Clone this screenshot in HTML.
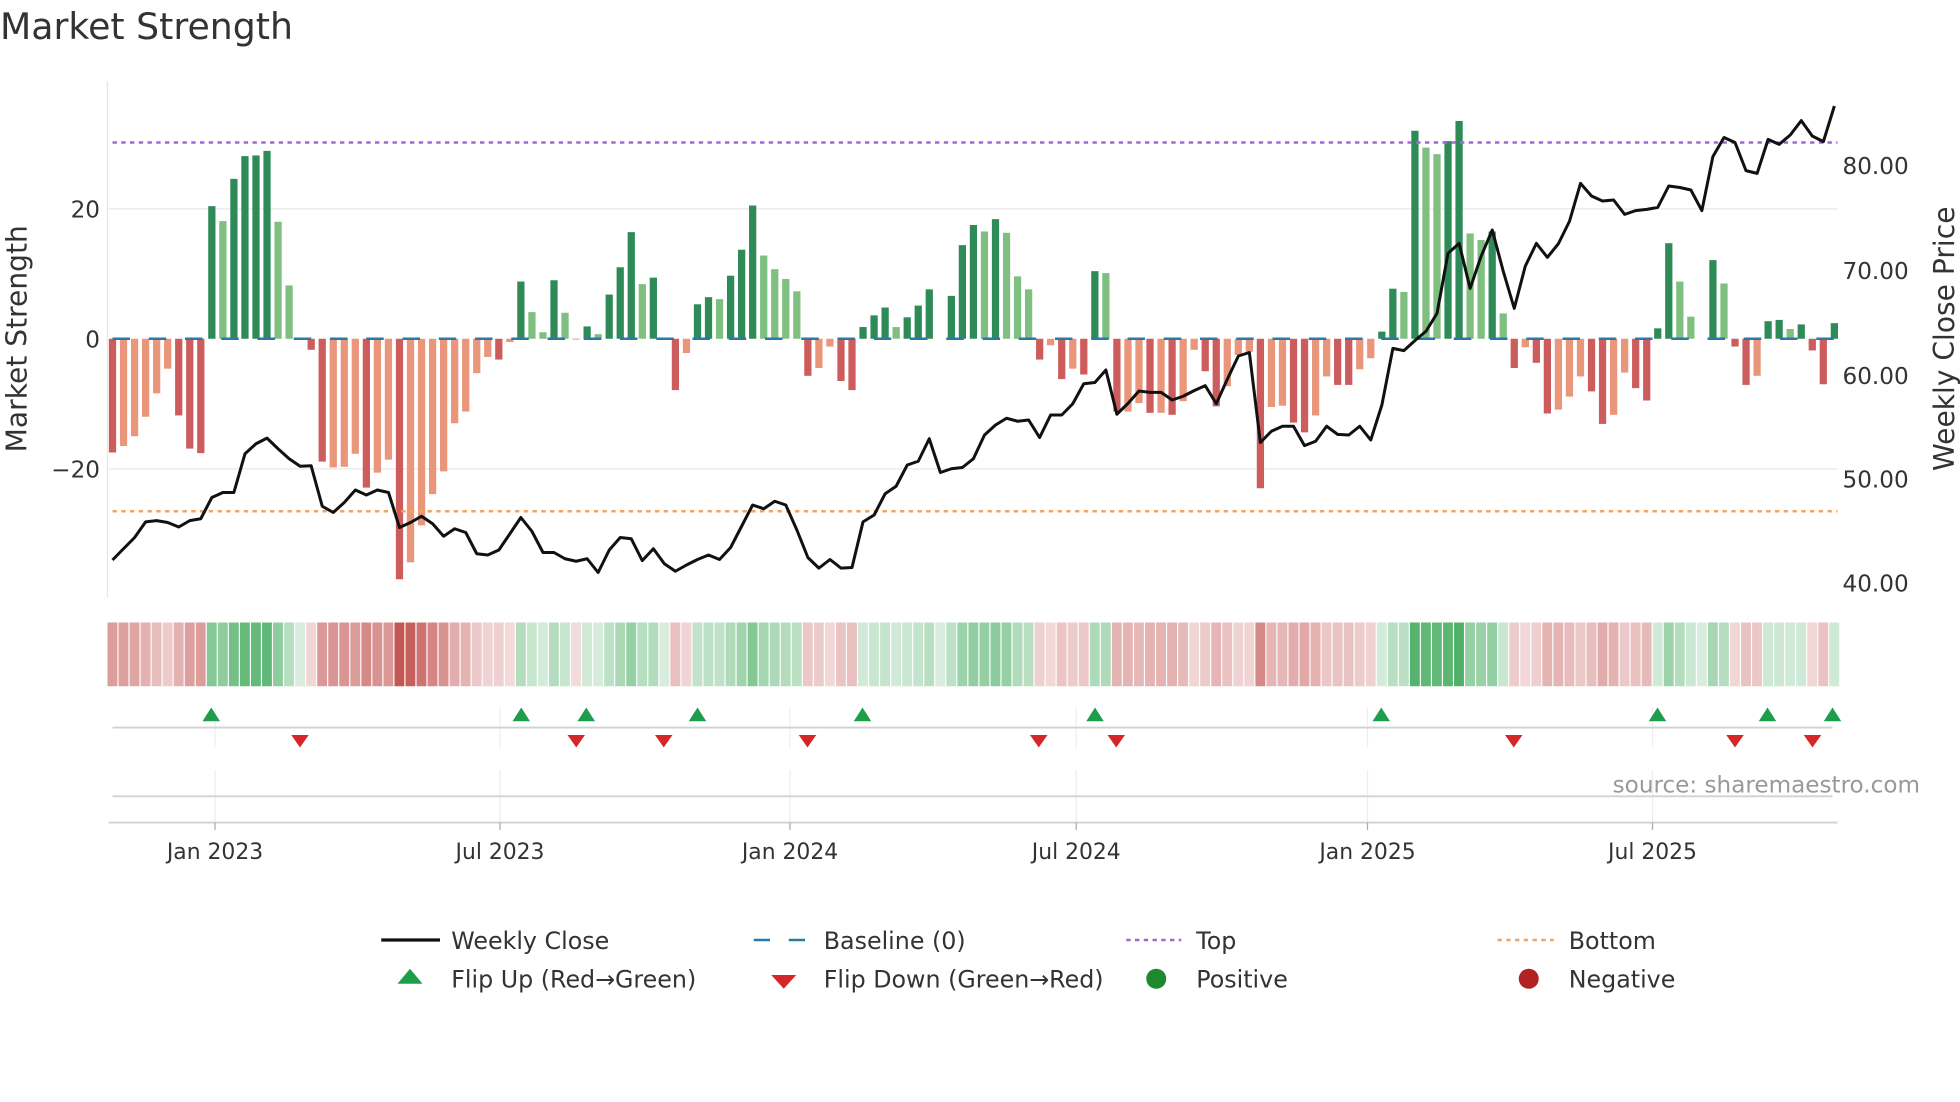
<!DOCTYPE html>
<html><head><meta charset="utf-8"><style>
html,body{margin:0;padding:0;background:#fff;}
svg{display:block;font-family:"DejaVu Sans","Liberation Sans",sans-serif;}
</style></head><body>
<svg id="s" width="1960" height="1102" viewBox="0 0 1568 881.6" xmlns="http://www.w3.org/2000/svg">
<rect width="1568" height="882" fill="#fff"/>
<text x="0" y="31" font-size="29" fill="#333">Market Strength</text>
<line x1="86" y1="65" x2="86" y2="478" stroke="#e6e6e6" stroke-width="1"/>
<line x1="87" y1="167" x2="1470" y2="167" stroke="#eee" stroke-width="1.3"/>
<line x1="87" y1="375" x2="1470" y2="375" stroke="#eee" stroke-width="1.3"/>
<g id="bars"></g>
<line x1="90" y1="114" x2="1470" y2="114" stroke="#a066d8" stroke-width="2" stroke-dasharray="3.5 3.5"/>
<line x1="90" y1="409" x2="1470" y2="409" stroke="#f2a462" stroke-width="2" stroke-dasharray="3.5 3.5"/>
<line x1="90" y1="271" x2="1470" y2="271" stroke="#2a78a8" stroke-width="2" stroke-dasharray="14 15"/>
<polyline id="price" fill="none" stroke="#111" stroke-width="2.4" stroke-linejoin="round"/>
<g font-size="18.5" fill="#333" text-anchor="end">
<text x="80" y="174">20</text><text x="80" y="278">0</text><text x="80" y="382">−20</text>
</g>
<g font-size="18.5" fill="#333">
<text x="1474" y="139">80.00</text><text x="1474" y="223">70.00</text><text x="1474" y="307">60.00</text><text x="1474" y="390">50.00</text><text x="1474" y="473">40.00</text>
</g>
<text transform="translate(21,271) rotate(-90)" font-size="22.5" fill="#333" text-anchor="middle">Market Strength</text>
<text transform="translate(1563,271) rotate(-90)" font-size="22.5" fill="#333" text-anchor="middle">Weekly Close Price</text>
<g id="strip"></g>
<g stroke="#eee" stroke-width="1">
<line x1="172" y1="566" x2="172" y2="598"/><line x1="400" y1="566" x2="400" y2="598"/><line x1="632" y1="566" x2="632" y2="598"/><line x1="861" y1="566" x2="861" y2="598"/><line x1="1094" y1="566" x2="1094" y2="598"/><line x1="1322" y1="566" x2="1322" y2="598"/>
<line x1="172" y1="616" x2="172" y2="658"/><line x1="400" y1="616" x2="400" y2="658"/><line x1="632" y1="616" x2="632" y2="658"/><line x1="861" y1="616" x2="861" y2="658"/><line x1="1094" y1="616" x2="1094" y2="658"/><line x1="1322" y1="616" x2="1322" y2="658"/>
</g>
<line x1="90" y1="582" x2="1466" y2="582" stroke="#d2d2d2" stroke-width="1.5"/>
<line x1="90" y1="637" x2="1466" y2="637" stroke="#d2d2d2" stroke-width="1.5"/>
<line x1="87" y1="658" x2="1470" y2="658" stroke="#d2d2d2" stroke-width="1.5"/>
<g stroke="#aaa" stroke-width="1">
<line x1="172" y1="658" x2="172" y2="664"/><line x1="400" y1="658" x2="400" y2="664"/><line x1="632" y1="658" x2="632" y2="664"/><line x1="861" y1="658" x2="861" y2="664"/><line x1="1094" y1="658" x2="1094" y2="664"/><line x1="1322" y1="658" x2="1322" y2="664"/>
</g>
<g id="marks"></g>
<text x="1536" y="634" font-size="18.5" fill="#999" text-anchor="end">source: sharemaestro.com</text>
<g font-size="17.5" fill="#333" text-anchor="middle">
<text x="172" y="687">Jan 2023</text><text x="400" y="687">Jul 2023</text><text x="632" y="687">Jan 2024</text><text x="861" y="687">Jul 2024</text><text x="1094" y="687">Jan 2025</text><text x="1322" y="687">Jul 2025</text>
</g>
<g font-size="19" fill="#333">
<line x1="305" y1="752" x2="352" y2="752" stroke="#111" stroke-width="2.6"/>
<text x="361" y="759">Weekly Close</text>
<line x1="603" y1="752" x2="647" y2="752" stroke="#2a78a8" stroke-width="2" stroke-dasharray="13 15"/>
<text x="659" y="759">Baseline (0)</text>
<line x1="901" y1="752" x2="945" y2="752" stroke="#a066d8" stroke-width="2" stroke-dasharray="3.5 3.5"/>
<text x="957" y="759">Top</text>
<line x1="1198" y1="752" x2="1243" y2="752" stroke="#f2a462" stroke-width="2" stroke-dasharray="3.5 3.5"/>
<text x="1255" y="759">Bottom</text>
<polygon points="328,775 338,787 318,787" fill="#1e9e4a"/>
<text x="361" y="790">Flip Up (Red→Green)</text>
<polygon points="617,780 637,780 627,791" fill="#d62728"/>
<text x="659" y="790">Flip Down (Green→Red)</text>
<circle cx="925" cy="783" r="8" fill="#1e8a2e"/>
<text x="957" y="790">Positive</text>
<circle cx="1223" cy="783" r="8" fill="#b22222"/>
<text x="1255" y="790">Negative</text>
</g>
</svg>
<script>
var V=[-17.5,-16.5,-15,-12,-8.4,-4.6,-11.8,-16.9,-17.6,20.4,18.1,24.6,28.1,28.2,28.9,18,8.2,0,-1.7,-18.9,-19.8,-19.7,-17.7,-22.9,-20.6,-18.6,-37,-34.4,-28.7,-23.9,-20.4,-13,-11.2,-5.3,-2.8,-3.2,-0.5,8.8,4.1,1,9,4,-0.1,1.9,0.7,6.8,11,16.4,8.4,9.4,0,-7.9,-2.2,5.3,6.4,6.1,9.7,13.7,20.5,12.8,10.7,9.2,7.3,-5.7,-4.5,-1.2,-6.5,-7.9,1.8,3.6,4.8,1.8,3.3,5.1,7.6,0,6.6,14.4,17.5,16.5,18.4,16.3,9.6,7.6,-3.2,-1,-6.2,-4.6,-5.5,10.4,10.1,-11.2,-11.2,-9.9,-11.4,-11.4,-11.7,-9.6,-1.7,-5,-10.4,-7.3,-2.5,-2,-23,-10.5,-10.3,-12.9,-14.4,-11.8,-5.8,-7.1,-7.1,-4.7,-3,1.1,7.7,7.2,32,29.4,28.4,30.4,33.5,16.2,15.2,16.5,3.9,-4.5,-1.3,-3.7,-11.5,-10.9,-8.9,-5.8,-8.1,-13.1,-11.7,-5.2,-7.6,-9.5,1.6,14.7,8.8,3.4,0,12.1,8.5,-1.2,-7.1,-5.7,2.7,2.9,1.5,2.2,-1.8,-7,2.4];
var P=[448,439,430,417.5,416.5,418,421.6,416.5,415,398,394,394,363,355,350.5,359,367,373,372.6,405,410,402,392,396,392,394,422,418,413,419,429,423,426,443,444,440,427,414,425,442,442,447,449,447,458,440,430,431,448.5,439,451,457,452,447.6,444,447.6,438,421,404,407,401,404,424,446,454.5,447.6,454.5,454,417.5,412,395,389,372,369,351,378,375,374,367,348,340,334.6,337,336,350,332,332,323,307,306,296,331.4,322.7,312.8,313.9,313.9,320,317,312.5,308.5,323,303.5,284.8,282,354,345,341,341,356.5,353,341,347.5,348,341,352,324,278.7,280.5,272.5,265,250.7,202.7,194.7,230.7,205,184,217,246.7,213,194.7,205.9,195,177,146.7,156.8,160.8,160,171.5,168.5,167.5,165.9,148.8,150,152,168.5,125.3,110,114,136.5,138.7,111.5,115.5,108,96.5,108.8,113.3,84.8];
var dark=[1,0,0,0,0,0,1,1,1,1,0,1,1,1,1,0,0,0,1,1,0,0,0,1,0,0,1,0,0,0,0,0,0,0,0,1,0,1,0,0,1,0,1,1,0,1,1,1,0,1,0,1,0,1,1,0,1,1,1,0,0,0,0,1,0,0,1,1,1,1,1,0,1,1,1,0,1,1,1,0,1,0,0,0,1,0,1,0,1,1,0,1,0,0,1,0,1,0,0,1,1,0,0,0,1,0,0,1,1,0,0,1,1,0,0,1,1,0,1,0,0,1,1,0,0,1,0,1,0,1,1,0,0,0,1,1,0,0,1,1,1,1,0,0,0,1,0,1,1,0,1,1,0,1,1,1,1];
var NS="http://www.w3.org/2000/svg";
function el(t,a,p){var e=document.createElementNS(NS,t);for(var k in a)e.setAttribute(k,a[k]);p.appendChild(e);return e;}
var bars=document.getElementById('bars'),strip=document.getElementById('strip'),marks=document.getElementById('marks');
var pts=[];
for(var i=0;i<V.length;i++){
 var x=90+i*8.83,v=V[i],h=Math.abs(v)*5.2,d=dark[i];
 var c=v>=0?(d?'#2e8b57':'#7fbf7f'):(d?'#cd5c5c':'#e9967a');
 if(h>0.3) el('rect',{x:x-2.9,y:v>=0?271-h:271,width:5.8,height:h,fill:c},bars);
 var a=Math.min(1,0.2+0.7*Math.abs(v)/34);
 el('rect',{x:x-4,y:498,width:7.9,height:51,fill:v>=0?'#3aa655':'#c0504d','fill-opacity':a},strip);
 pts.push(x.toFixed(1)+','+P[i]);
}
document.getElementById('price').setAttribute('points',pts.join(' '));
[169,417,469,558,690,876,1105,1326,1414,1466].forEach(function(x){el('polygon',{points:(x)+',566 '+(x+7)+',577 '+(x-7)+',577',fill:'#1e9e4a'},marks);});
[240,461,531,646,831,893,1211,1388,1450].forEach(function(x){el('polygon',{points:(x-7)+',588 '+(x+7)+',588 '+x+',598',fill:'#d62728'},marks);});
</script>
</body></html>
